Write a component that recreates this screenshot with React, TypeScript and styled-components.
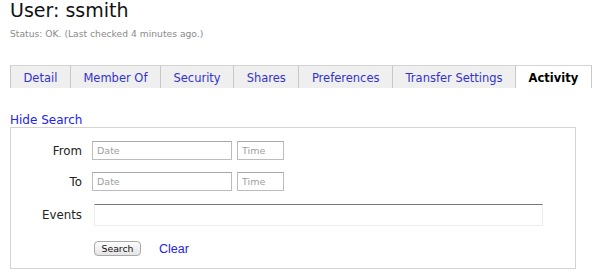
import React from "react";
import styled, { createGlobalStyle } from "styled-components";

const Global = createGlobalStyle`
  html, body { margin: 0; padding: 0; background: #fff; }
  body { font-family: "DejaVu Sans", Verdana, sans-serif; }
`;

const Page = styled.div`
  padding: 0 10px;
  width: 566px;
`;

const Title = styled.h1`
  margin: 0;
  font-size: 19px;
  font-weight: normal;
  line-height: 21px;
  color: #111;
`;

const Status = styled.div`
  margin-top: 7px;
  font-size: 9.2px;
  line-height: 12px;
  color: #8a8a8a;
`;

const Tabs = styled.div`
  display: flex;
  margin-top: 25px;
  width: 600px;
`;

const Tab = styled.div<{ $active?: boolean; $first?: boolean }>`
  box-sizing: border-box;
  flex-shrink: 0;
  white-space: nowrap;
  height: 23px;
  padding: 2px 12.5px 0;
  display: flex;
  align-items: center;
  font-size: 11.5px;
  background: ${(p) => (p.$active ? "#fff" : "#efefef")};
  border-top: 1px solid #d4d4d4;
  border-right: 1px solid #c8c8c8;
  border-left: ${(p) => (p.$first ? "1px solid #c8c8c8" : "none")};
  color: ${(p) => (p.$active ? "#000" : "#3333cc")};
  font-weight: ${(p) => (p.$active ? "bold" : "normal")};
`;

const Link = styled.a`
  display: block;
  margin-top: 26px;
  font-size: 12px;
  line-height: 13px;
  color: #2222ee;
  text-decoration: none;
`;

const Box = styled.div`
  box-sizing: border-box;
  height: 142px;
  border: 1px solid #d4d4d4;
  padding-top: 13px;
  display: flex;
  flex-direction: column;
`;

const Row = styled.div<{ $mt: number; $h: number }>`
  display: flex;
  align-items: center;
  height: ${(p) => p.$h}px;
  margin-top: ${(p) => p.$mt}px;
`;

const Label = styled.div`
  width: 71px;
  margin-right: 10px;
  text-align: right;
  font-size: 11.8px;
  color: #222;
`;

const Fields = styled.div`
  display: flex;
  gap: 5px;
  align-items: center;
`;

const Input = styled.input<{ $w: number }>`
  box-sizing: border-box;
  width: ${(p) => p.$w}px;
  height: 19px;
  border: 1px solid #bcbcbc;
  border-top-color: #a8a8a8;
  padding: 0 4px;
  font-family: "DejaVu Sans", sans-serif;
  font-size: 9.5px;
  outline: none;
  &::placeholder { color: #a0a0a0; }
`;

const EventsInput = styled.input`
  box-sizing: border-box;
  margin-left: 2px;
  width: 449px;
  height: 22px;
  border: 1px solid #ececec;
  border-top: 1.5px solid #777;
  outline: none;
`;

const Actions = styled.div`
  display: flex;
  align-items: center;
  gap: 18px;
  padding-left: 2px;
`;

const Button = styled.button`
  box-sizing: border-box;
  width: 47px;
  height: 15px;
  padding: 0;
  border: 1px solid #a9a9a9;
  border-radius: 4px;
  background: linear-gradient(#fdfdfd, #e4e4e4);
  font-family: "DejaVu Sans", sans-serif;
  font-size: 9.3px;
  line-height: 13px;
  color: #111;
`;

const ClearLink = styled.a`
  font-family: "Liberation Sans", Arial, sans-serif;
  font-size: 12.5px;
  color: #2222ee;
  text-decoration: none;
`;

export default function App() {
  return (
    <>
      <Global />
      <Page>
        <Title>User: ssmith</Title>
        <Status>Status: OK. (Last checked 4 minutes ago.)</Status>
        <Tabs>
          <Tab $first>Detail</Tab>
          <Tab>Member Of</Tab>
          <Tab>Security</Tab>
          <Tab>Shares</Tab>
          <Tab>Preferences</Tab>
          <Tab>Transfer Settings</Tab>
          <Tab $active>Activity</Tab>
        </Tabs>
        <Link href="#">Hide Search</Link>
        <Box>
          <Row $mt={0} $h={19}>
            <Label>From</Label>
            <Fields>
              <Input $w={140} placeholder="Date" />
              <Input $w={47} placeholder="Time" />
            </Fields>
          </Row>
          <Row $mt={12} $h={19}>
            <Label>To</Label>
            <Fields>
              <Input $w={140} placeholder="Date" />
              <Input $w={47} placeholder="Time" />
            </Fields>
          </Row>
          <Row $mt={13} $h={22}>
            <Label>Events</Label>
            <Fields>
              <EventsInput />
            </Fields>
          </Row>
          <Row $mt={15} $h={15}>
            <Label />
            <Actions>
              <Button>Search</Button>
              <ClearLink href="#">Clear</ClearLink>
            </Actions>
          </Row>
        </Box>
      </Page>
    </>
  );
}
